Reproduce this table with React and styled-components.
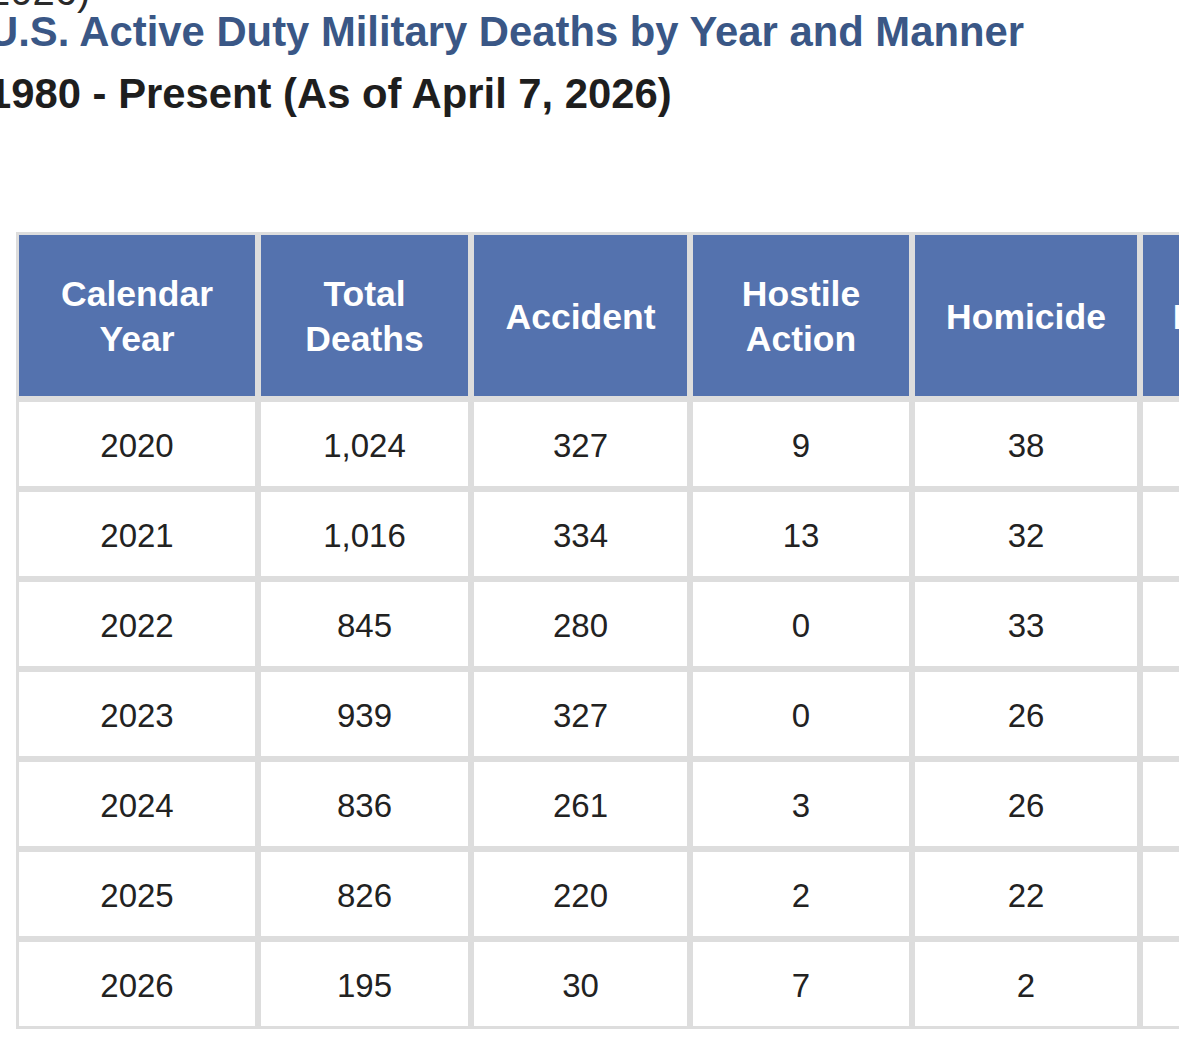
import React from 'react'
import styled, { createGlobalStyle } from 'styled-components'

const GlobalStyle = createGlobalStyle`
  html, body {
    margin: 0;
    padding: 0;
    background: #fff;
    overflow: hidden;
  }
  body {
    font-family: "Liberation Sans", Arial, Helvetica, sans-serif;
  }
`

const Page = styled.div`
  margin: -19px 0 0 -12px;
  width: 1400px;
`

const PrevLine = styled.div`
  font-size: 40px;
  line-height: 20px;
  color: #2a2a2a;
  white-space: nowrap;
`

const Title = styled.h1`
  margin: 0;
  font-size: 41.8px;
  line-height: 62px;
  font-weight: bold;
  color: ${(props) => (props.sub ? '#1e1e1e' : '#3a5786')};
  white-space: nowrap;
`

const Table = styled.table`
  margin: 107px 0 0 28px;
  border-collapse: separate;
  border-spacing: 0;
  table-layout: fixed;
`

const Th = styled.th`
  box-sizing: content-box;
  width: ${(props) => props.w - 6}px;
  height: 158px;
  padding: 3px 18px 0;
  border: 3px solid #dddddd;
  background: #5472ae;
  color: #fff;
  font-size: 35.5px;
  line-height: 45px;
  font-weight: bold;
  text-align: center;
  vertical-align: middle;
`

const Td = styled.td`
  height: 81px;
  padding: 3px 0 0;
  border: 3px solid #dddddd;
  background: #fff;
  color: #222;
  font-size: 33px;
  text-align: center;
  vertical-align: middle;
`

const columns = [
  { label: ['Calendar', 'Year'], w: 242 },
  { label: ['Total', 'Deaths'], w: 213 },
  { label: ['Accident'], w: 219 },
  { label: ['Hostile', 'Action'], w: 222 },
  { label: ['Homicide'], w: 228 },
  { label: ['Illness'], w: 176 },
]

const rows = [
  ['2020', '1,024', '327', '9', '38'],
  ['2021', '1,016', '334', '13', '32'],
  ['2022', '845', '280', '0', '33'],
  ['2023', '939', '327', '0', '26'],
  ['2024', '836', '261', '3', '26'],
  ['2025', '826', '220', '2', '22'],
  ['2026', '195', '30', '7', '2'],
]

const App = () => {
  return (
    <Page>
      <GlobalStyle />
      <PrevLine>2026)</PrevLine>
      <Title>U.S. Active Duty Military Deaths by Year and Manner</Title>
      <Title sub>1980 - Present (As of April 7, 2026)</Title>
      <Table>
        <thead>
          <tr>
            {columns.map((c) => (
              <Th key={c.label.join(' ')} w={c.w - 36}>
                {c.label.map((l, i) => (
                  <React.Fragment key={l}>
                    {i > 0 && <br />}
                    {l}
                  </React.Fragment>
                ))}
              </Th>
            ))}
          </tr>
        </thead>
        <tbody>
          {rows.map((r) => (
            <tr key={r[0]}>
              {r.map((v, i) => (
                <Td key={i}>{v}</Td>
              ))}
              <Td />
            </tr>
          ))}
        </tbody>
      </Table>
    </Page>
  )
}

export default App
